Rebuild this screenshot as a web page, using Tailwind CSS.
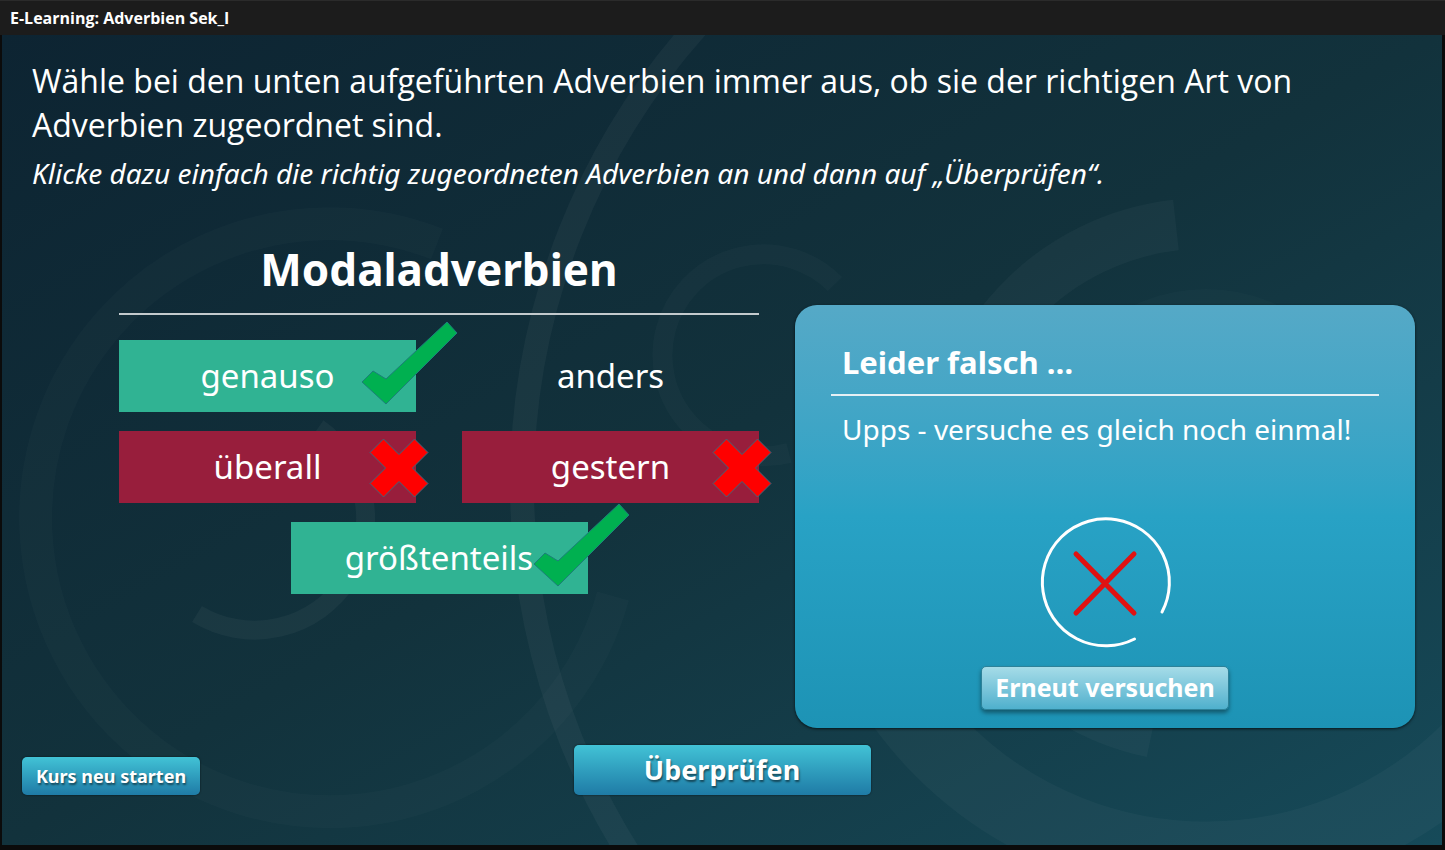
<!DOCTYPE html>
<html lang="de">
<head>
  <meta charset="UTF-8" />
  <meta name="viewport" content="width=device-width, initial-scale=1.0"/>
  <title>E-Learning: Adverbien Sek_I</title>
  <!-- Tailwind CSS via CDN -->
  <script src="https://cdn.jsdelivr.net/npm/@tailwindcss/browser@4"></script>
</head>
<body class="min-h-screen flex flex-col bg-[#0b0b0b] text-white font-['Noto_Sans','Open_Sans',sans-serif]">

  <!-- Title bar -->
  <header class="h-[35px] shrink-0 flex items-center px-[10px] bg-[#1c1c1c] border-t border-[#2b2b2b]">
    <h1 class="font-['Open_Sans',sans-serif] text-base font-bold">E-Learning: Adverbien Sek_I</h1>
  </header>

  <!-- Stage -->
  <main class="relative isolate flex-1 flex flex-col overflow-hidden ml-[2px] mr-[3px] mb-[5px] bg-linear-to-br from-[#0d2432] via-[#12323c] to-[#164a59]">

    <!-- Background rings -->
    <svg class="absolute inset-0 -z-10 w-full h-full" viewBox="2 35 1440 810" preserveAspectRatio="xMidYMid slice" fill="none" stroke="#fff" aria-hidden="true">
      <path d="M437 244A294 294 0 1 0 613 596" stroke-width="33" stroke-opacity=".018"/>
      <path d="M197 614A111 111 0 0 0 318 428" stroke-width="19" stroke-opacity=".04"/>
      <circle cx="1210" cy="485" r="688" stroke-width="24" stroke-opacity=".04"/>
      <path d="M835 284A101 101 0 1 0 789 453" stroke-width="20" stroke-opacity=".025"/>
      <path d="M1176 225A257 257 0 0 0 1152 732" stroke-width="51" stroke-opacity=".03"/>
      <path d="M833 486A373 373 0 0 0 1579 486" stroke-width="75" stroke-opacity=".03"/>
      <circle cx="1206" cy="459" r="150" stroke-width="40" stroke-opacity=".015"/>
    </svg>

    <!-- Task -->
    <div class="pt-[24px] pl-[30px] pr-[27px]">
      <p class="max-w-[1300px] font-['Open_Sans',sans-serif] text-[32px] leading-[44px]">Wähle bei den unten aufgeführten Adverbien immer aus, ob sie der richtigen Art von Adverbien zugeordnet sind.</p>
      <p class="mt-[6px] text-[28px] leading-[40px] italic">Klicke dazu einfach die richtig zugeordneten Adverbien an und dann auf „Überprüfen“.</p>
    </div>

    <div class="mt-[46px] pl-[117px] pr-[27px] grid grid-cols-[640fr_620fr] gap-9 items-start">

      <!-- Answers -->
      <section>
        <h2 class="text-center text-[44px] leading-[60px] font-bold">Modaladverbien</h2>
        <hr class="mt-[14px] border-0 h-[2px] bg-[#c3cacd]" />
        <div class="mt-[25px] flex flex-wrap justify-center gap-x-[46px] gap-y-[19px] text-[33px] leading-[72px]">
          <button class="relative w-[297px] h-[72px] bg-[#30b393]">genauso
            <svg class="absolute -right-[42px] -top-[19px] w-[97px] h-[84px]" viewBox="0 0 97 84" fill="#00b050" stroke="#1b7f7a" aria-hidden="true">
              <path d="M1 61L12 50L25 58L86 1L96 12L25 83Z"/>
            </svg>
          </button>
          <button class="relative w-[297px] h-[72px]">anders</button>
          <button class="relative w-[297px] h-[72px] bg-[#981e3c]">überall
            <svg class="absolute -right-[13px] top-[7px] size-[60px]" viewBox="0 0 60 60" fill="#f00" stroke="#40667a" aria-hidden="true">
              <path d="M14.5 1L30 16.5L45.5 1L59 14.5L43.5 30L59 45.5L45.5 59L30 43.5L14.5 59L1 45.5L16.5 30L1 14.5Z"/>
            </svg>
          </button>
          <button class="relative w-[297px] h-[72px] bg-[#981e3c]">gestern
            <svg class="absolute -right-[13px] top-[7px] size-[60px]" viewBox="0 0 60 60" fill="#f00" stroke="#40667a" aria-hidden="true">
              <path d="M14.5 1L30 16.5L45.5 1L59 14.5L43.5 30L59 45.5L45.5 59L30 43.5L14.5 59L1 45.5L16.5 30L1 14.5Z"/>
            </svg>
          </button>
          <button class="relative w-[297px] h-[72px] bg-[#30b393]">größtenteils
            <svg class="absolute -right-[42px] -top-[19px] w-[97px] h-[84px]" viewBox="0 0 97 84" fill="#00b050" stroke="#1b7f7a" aria-hidden="true">
              <path d="M1 61L12 50L25 58L86 1L96 12L25 83Z"/>
            </svg>
          </button>
        </div>
      </section>

      <!-- Feedback -->
      <section class="mt-[66px] px-9 pt-[35px] pb-[18px] flex flex-col rounded-[22px] bg-linear-to-b from-[#55a9c7] via-[#28a2c5] to-[#1d93b5] shadow-[0_1px_3px_rgba(0,0,0,0.7)]">
        <h2 class="px-[11px] text-[31px] leading-[44px] font-bold">Leider falsch …</h2>
        <hr class="mt-[10px] border-0 h-[2px] bg-[#e6f0f5]" />
        <p class="mt-[11px] px-[11px] text-[28px] leading-[44px]">Upps - versuche es gleich noch einmal!</p>
        <svg class="mt-[67px] self-center size-[130px] overflow-visible" viewBox="0 0 130 130" fill="none" stroke-width="3" aria-hidden="true">
          <path d="M122 94A63.5 63.5 0 1 0 94.5 121" stroke="#fff" stroke-linecap="round"/>
          <path d="M36 36L94 95M94 36L36 95" stroke="#e01212" stroke-width="5" stroke-linecap="round"/>
        </svg>
        <button class="mt-[18px] self-center w-[248px] h-[44px] rounded-[5px] text-[25px] font-bold bg-linear-to-b from-[#a5dce8] to-[#4eb0cd] border border-[#2d8299] shadow-[0_3px_4px_rgba(0,0,0,0.4)]">Erneut versuchen</button>
      </section>
    </div>

    <!-- Actions -->
    <div class="mt-[17px] mb-[50px] px-5 grid grid-cols-[1fr_auto_1fr] items-end">
      <button class="justify-self-start w-[178px] h-[38px] rounded-[5px] text-[18px] font-bold text-shadow-[1px_2px_2px_rgba(0,0,0,0.5)] bg-linear-to-b from-[#42c3d6] to-[#1f7ba6] shadow-[0_0_2px_rgba(0,0,0,0.7)]">Kurs neu starten</button>
      <button class="w-[297px] h-[50px] rounded-[5px] text-[27px] font-bold text-shadow-[1px_2px_2px_rgba(0,0,0,0.5)] bg-linear-to-b from-[#42c3d6] to-[#1f7ba6] shadow-[0_0_2px_rgba(0,0,0,0.7)]">Überprüfen</button>
    </div>
  </main>

</body>
</html>
